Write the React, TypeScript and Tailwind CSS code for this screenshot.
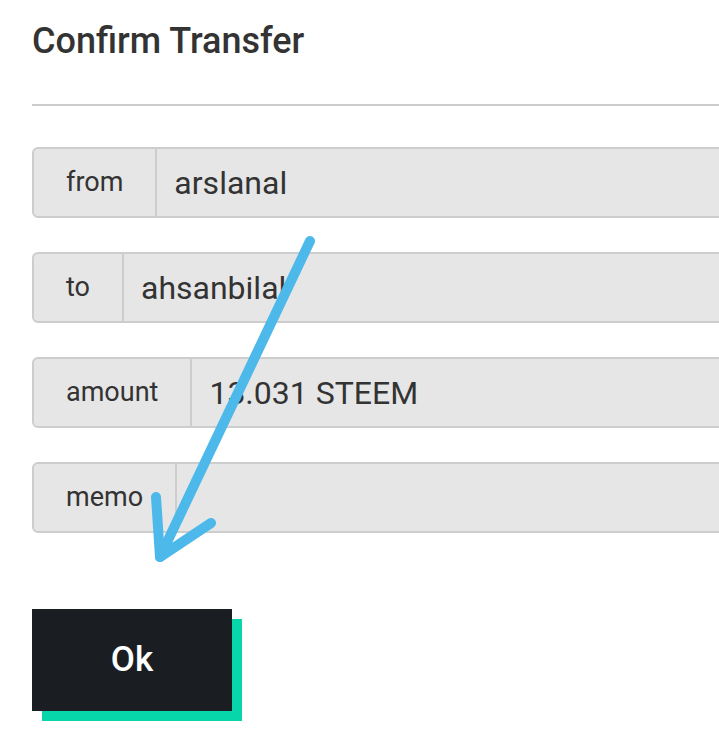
import React from "react";

const rows = [
  { label: "from", value: "arslanal" },
  { label: "to", value: "ahsanbilal" },
  { label: "amount", value: "13.031 STEEM" },
  { label: "memo", value: "" },
];

export default function App() {
  return (
    <div
      className="relative w-[719px] h-[739px] overflow-hidden bg-white text-[#333]"
      style={{ fontFamily: "Roboto, 'Liberation Sans', sans-serif" }}
    >
      <div className="pl-[32px] pt-[20px]">
        <h2 className="text-[36px] leading-[42px] font-medium text-[#333]">Confirm Transfer</h2>
        <div className="mt-[42px] mr-[-10px] border-t-2 border-[#cccccc]" />

        <div className="mt-[41px] flex flex-col gap-[34px]">
          {rows.map((r) => (
            <div
              key={r.label}
              className="flex h-[71px] mr-[-20px] rounded-[6px] border-2 border-[#cdcdcd] bg-[#e6e6e6] overflow-hidden"
            >
              <div className="flex items-center px-[32px] border-r-2 border-[#cdcdcd] text-[27px] text-[#333]">
                {r.label}
              </div>
              <div className="flex flex-1 items-center pl-[17px] text-[32px] text-[#333]">{r.value}</div>
            </div>
          ))}
        </div>

        <div className="relative mt-[76px] w-[210px] h-[112px]">
          <div className="absolute left-[10px] top-[10px] w-[200px] h-[102px] bg-[#06d6a9]" />
          <button className="absolute left-0 top-0 w-[200px] h-[102px] bg-[#1a1e23] text-white text-[35px] font-medium leading-none pb-[2px]">
            Ok
          </button>
        </div>
      </div>

      <svg className="absolute left-0 top-0 pointer-events-none" width="719" height="739">
        <g stroke="#4cb9ea" strokeWidth="10" strokeLinecap="round" strokeLinejoin="round" fill="none">
          <path d="M310 241 L160 557" />
          <path d="M156 497 L160 557 L211 523" />
        </g>
      </svg>
    </div>
  );
}
